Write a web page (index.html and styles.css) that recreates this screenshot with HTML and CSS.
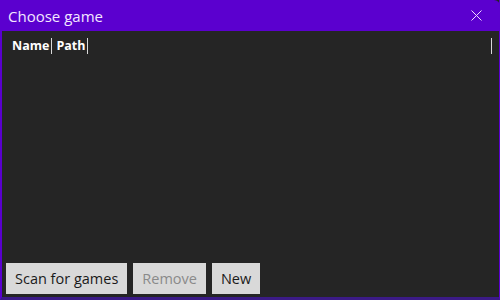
FILE: index.html
```html
<!DOCTYPE html>
<html lang="en">
<head>
    <meta charset="UTF-8">
    <title>Choose game</title>
    <link rel="stylesheet" href="styles.css">
</head>
<body>
    <div class="window">
        <div class="title-bar">
            <span class="title">Choose game</span>
            <span class="close-btn">
                <svg width="11" height="11" viewBox="0 0 11 11"><path d="M0.5 0.5L10.5 10.5M10.5 0.5L0.5 10.5" stroke="#f0d8ff" stroke-width="1"/></svg>
            </span>
        </div>
        <div class="content">
            <div class="list-header">
                <span class="col">Name</span>
                <span class="col">Path</span>
                <span class="col-fill"></span>
            </div>
            <div class="list-body"></div>
            <div class="button-row">
                <button class="btn">Scan for games</button>
                <button class="btn" disabled>Remove</button>
                <button class="btn">New</button>
            </div>
        </div>
    </div>
</body>
</html>
```

FILE: styles.css
```css
body {
    margin: 0;
    width: 500px;
    height: 300px;
    background-color: #ffffff;
    font-family: "Open Sans", "Noto Sans", sans-serif;
}
.window {
    display: flex;
    flex-direction: column;
    width: 500px;
    height: 300px;
    box-sizing: border-box;
    border: 1px solid #5a00cf;
    border-left-width: 2px;
    border-bottom: 3px solid #3b1a86;
    border-top: none;
    background-color: #252525;
}
.title-bar {
    display: flex;
    align-items: center;
    justify-content: space-between;
    height: 31px;
    padding: 0 13px 0 8px;
    margin: 0 -1px 0 -2px;
    background-color: #5b00cf;
    border-top-right-radius: 6px;
}
.title {
    color: #f3e6ff;
    font-size: 15px;
}
.close-btn {
    display: flex;
    align-items: center;
    padding-right: 5px;
}
.content {
    flex: 1;
    display: flex;
    flex-direction: column;
    padding: 0 5px 0 4px;
}
.list-header {
    display: flex;
    align-items: center;
    height: 28px;
    padding-top: 1px;
    padding-left: 5px;
}
.col {
    color: #ffffff;
    font-weight: bold;
    font-size: 12.5px;
    padding: 0 2px 0 1px;
    border-right: 1px solid #d8d8d8;
    line-height: 16px;
}
.col + .col {
    padding-left: 4px;
}
.col-fill {
    flex: 1;
    height: 16px;
    border-right: 1px solid #d8d8d8;
    margin-right: 2px;
}
.list-body {
    flex: 1;
}
.button-row {
    display: flex;
    gap: 6px;
    padding-bottom: 3px;
}
.btn {
    height: 31px;
    padding: 0 9px;
    border: none;
    background-color: #d9d9d9;
    color: #1a1a1a;
    font-family: "Open Sans", "Noto Sans", sans-serif;
    font-size: 14.5px;
}
.btn:disabled {
    color: #8a8a8a;
}
```
